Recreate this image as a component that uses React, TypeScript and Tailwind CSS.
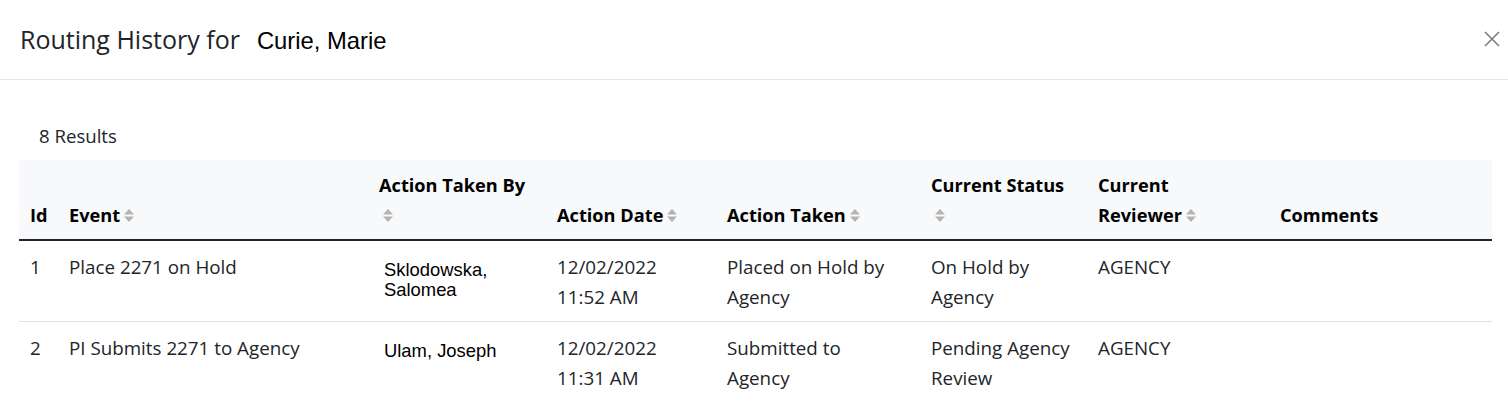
import React from "react";

const SortIcon = () => (
  <svg width="12" height="15" viewBox="0 0 12 15" className="inline-block ml-[3px] -mt-[3px] align-middle">
    <path d="M6 1 L11 6.5 L1 6.5 Z" fill="#b3b3b3" />
    <path d="M6 14 L11 8.5 L1 8.5 Z" fill="#b3b3b3" />
  </svg>
);

const rows = [
  {
    id: 1,
    event: "Place 2271 on Hold",
    by: ["Sklodowska,", "Salomea"],
    date: ["12/02/2022", "11:52 AM"],
    action: ["Placed on Hold by", "Agency"],
    status: ["On Hold by", "Agency"],
    reviewer: "AGENCY",
  },
  {
    id: 2,
    event: "PI Submits 2271 to Agency",
    by: ["Ulam, Joseph"],
    date: ["12/02/2022", "11:31 AM"],
    action: ["Submitted to", "Agency"],
    status: ["Pending Agency", "Review"],
    reviewer: "AGENCY",
  },
];

const Lines = ({ lines }: { lines: string[] }) => (
  <>
    {lines.map((l) => (
      <div key={l}>{l}</div>
    ))}
  </>
);

export default function App() {
  return (
    <div className="w-[1508px] h-[402px] bg-white overflow-hidden font-['Open_Sans',sans-serif] text-[#212529]">
      {/* Header */}
      <div className="h-[80px] flex items-center justify-between border-b border-[#e5e7ea] pl-[20px] pr-[8px]">
        <div className="flex items-baseline">
          <span className="text-[25px] text-[#212529]">Routing History for</span>
          <span className="ml-[17px] text-[23.8px] text-black font-['Liberation_Sans',sans-serif]">Curie, Marie</span>
        </div>
        <svg width="16" height="16" viewBox="0 0 16 16" className="mb-[2px]">
          <path d="M1 1 L15 15 M15 1 L1 15" stroke="#7a7a7a" strokeWidth="1.5" />
        </svg>
      </div>

      {/* Body */}
      <div className="pl-[19px] pr-[16px] pt-[43px]">
        <div className="pl-[20px] text-[18.6px] leading-[26px] mb-[11px]">8 Results</div>
        <table className="w-[1473px] border-collapse table-fixed">
          <colgroup>
            <col className="w-[39px]" />
            <col className="w-[310px]" />
            <col className="w-[178px]" />
            <col className="w-[170px]" />
            <col className="w-[204px]" />
            <col className="w-[167px]" />
            <col className="w-[182px]" />
            <col className="w-[223px]" />
          </colgroup>
          <thead>
            <tr className="bg-[#f8f9fa] border-b-2 border-[#212529] text-[18.2px] leading-[30px] text-black text-left">
              <th className="px-[11px] pt-[10px] pb-[9px] align-bottom font-bold">Id</th>
              <th className="px-[11px] pt-[10px] pb-[9px] align-bottom font-bold whitespace-nowrap">Event<SortIcon /></th>
              <th className="px-[11px] pt-[10px] pb-[9px] align-bottom font-bold whitespace-nowrap">
                Action Taken By
                <br />
                <SortIcon />
              </th>
              <th className="px-[11px] pt-[10px] pb-[9px] align-bottom font-bold whitespace-nowrap">Action Date<SortIcon /></th>
              <th className="px-[11px] pt-[10px] pb-[9px] align-bottom font-bold whitespace-nowrap">Action Taken<SortIcon /></th>
              <th className="px-[11px] pt-[10px] pb-[9px] align-bottom font-bold whitespace-nowrap">
                Current Status
                <br />
                <SortIcon />
              </th>
              <th className="px-[11px] pt-[10px] pb-[9px] align-bottom font-bold whitespace-nowrap">
                Current
                <br />
                Reviewer<SortIcon />
              </th>
              <th className="px-[11px] pt-[10px] pb-[9px] align-bottom font-bold">Comments</th>
            </tr>
          </thead>
          <tbody>
            {rows.map((r) => (
              <tr key={r.id} className="border-b border-[#dee2e6] text-[18.8px] leading-[30px] align-top whitespace-nowrap">
                <td className="px-[11px] pt-[11px] pb-[9px]">{r.id}</td>
                <td className="px-[11px] pt-[11px] pb-[9px]">{r.event}</td>
                <td className="px-[11px] pt-[11px] pb-[9px]">
                  <div className="pl-[5px] pt-[8px] font-['Liberation_Sans',sans-serif] text-[18.4px] leading-[20px] text-black">
                    <Lines lines={r.by} />
                  </div>
                </td>
                <td className="px-[11px] pt-[11px] pb-[9px]">
                  <Lines lines={r.date} />
                </td>
                <td className="px-[11px] pt-[11px] pb-[9px]">
                  <Lines lines={r.action} />
                </td>
                <td className="px-[11px] pt-[11px] pb-[9px]">
                  <Lines lines={r.status} />
                </td>
                <td className="px-[11px] pt-[11px] pb-[9px]">{r.reviewer}</td>
                <td className="px-[11px] pt-[11px] pb-[9px]"></td>
              </tr>
            ))}
          </tbody>
        </table>
      </div>
    </div>
  );
}
